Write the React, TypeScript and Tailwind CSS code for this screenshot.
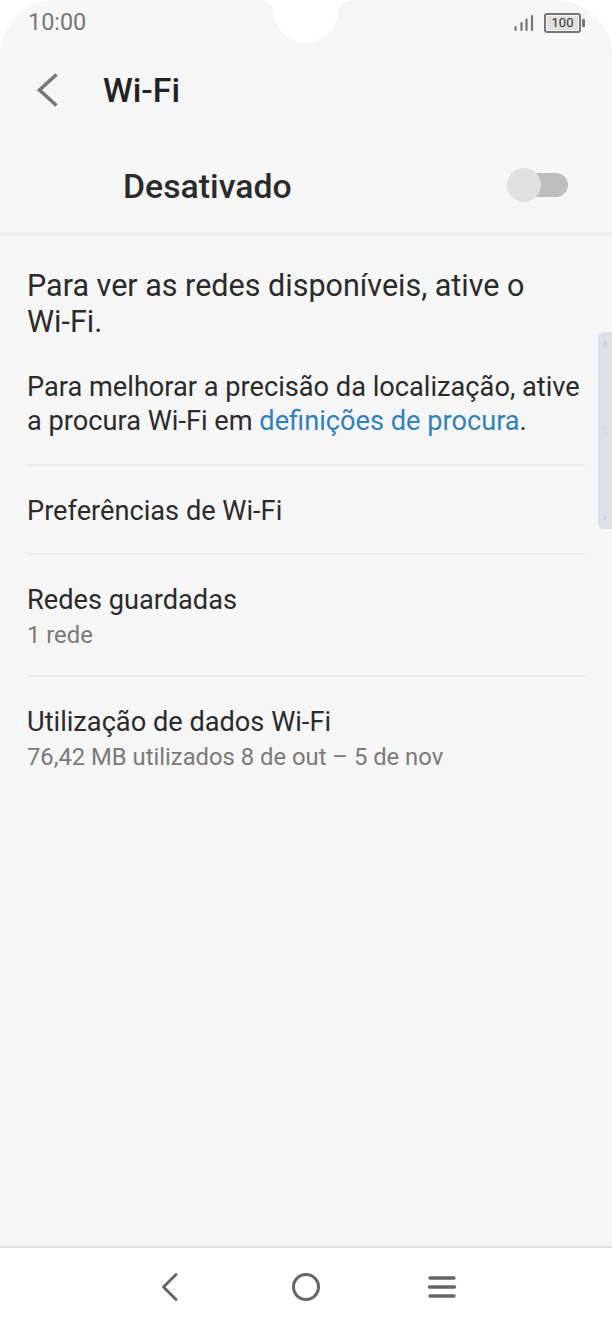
function Row({ title, sub }: { title: string; sub?: string }) {
  return (
    <div className="border-t-2 border-[#ebebeb] pt-[28px]">
      <p className="text-[27.2px] leading-[35px] text-[#2b2b2b]">{title}</p>
      {sub && <p className="text-[23.8px] leading-[32px] mt-[1px] text-[#7a7a7a]">{sub}</p>}
    </div>
  );
}

export default function App() {
  return (
    <div className="w-[612px] h-[1328px] bg-white flex flex-col overflow-hidden font-['Roboto',sans-serif] relative">
      <div className="flex-1 bg-[#f6f6f6] rounded-t-[56px] relative flex flex-col">
        {/* notch */}
        <svg className="absolute left-[225px] top-0" width="140" height="44" viewBox="0 0 140 44">
          <path d="M30 0 C 42 0 47 3 49 12 C 50 30 64 42 81 42 C 98 42 112 30 113 12 C 115 3 120 0 132 0 Z" fill="#fff" />
        </svg>

        {/* status bar */}
        <div className="h-[44px] flex items-center justify-between pl-[28px] pr-[27px] pt-[1px]">
          <span className="text-[23.4px] text-[#777777] pt-[1px]">10:00</span>
          <div className="flex items-center gap-[10px]">
            <svg width="20" height="18" viewBox="0 0 20 18">
              <g stroke="#777" strokeWidth="2.2" strokeLinecap="round">
                <path d="M1.5 16v-3" />
                <path d="M7.5 16V9" />
                <path d="M12.5 16V5.5" />
                <path d="M18 16V2" />
              </g>
            </svg>
            <div className="flex items-center">
              <div className="w-[37px] h-[20px] border-2 border-[#777] rounded-[3px] p-[1px]">
                <div className="h-full bg-[#e0e0e0] rounded-[1px] flex items-center justify-center text-[13px] leading-none text-[#333]">
                  100
                </div>
              </div>
              <div className="w-[3px] h-[8px] bg-[#777] ml-[1px]" />
            </div>
          </div>
        </div>

        {/* title bar */}
        <div className="h-[92px] flex items-center">
          <svg className="ml-[32px]" width="32" height="40" viewBox="0 0 32 40" fill="none" stroke="#777" strokeWidth="3.6">
            <path d="M24.5 4.5 L7.5 20 L24.5 35.5" />
          </svg>
          <h1 className="ml-[39px] pt-[2px] text-[33.8px] font-medium text-[#222222]">Wi-Fi</h1>
        </div>

        {/* master switch */}
        <div className="h-[100px] pt-[2px] flex items-center justify-between pl-[123px] pr-[44px] border-b-[4px] border-[#eeeeee]">
          <span className="pt-[4px] text-[33.8px] font-medium text-[#2b2b2b]">Desativado</span>
          <div className="relative w-[60px] h-[24px] bg-[#bdbdbd] rounded-full">
            <div className="absolute left-[-1px] top-[-5px] w-[34px] h-[34px] rounded-full bg-[#e0e0e0]" />
          </div>
        </div>

        {/* content */}
        <div className="px-[27px] pt-[32px] flex flex-col">
          <p className="text-[30.5px] leading-[36px] text-[#2b2b2b]">
            Para ver as redes disponíveis, ative o
            <br />
            Wi-Fi.
          </p>
          <p className="mt-[30px] text-[27.2px] leading-[34px] text-[#2b2b2b]">
            Para melhorar a precisão da localização, ative
            <br />
            a procura Wi-Fi em <span className="text-[#3281b8]">definições de procura</span>.
          </p>
          <div className="mt-[26px]">
            <div className="h-[89px]">
              <Row title="Preferências de Wi-Fi" />
            </div>
            <div className="h-[122px]">
              <Row title="Redes guardadas" sub="1 rede" />
            </div>
            <Row title="Utilização de dados Wi-Fi" sub="76,42 MB utilizados 8 de out – 5 de nov" />
          </div>
        </div>

        {/* scroll handle */}
        <div className="absolute right-0 top-[332px] w-[14px] h-[197px] bg-[#dde0e7] rounded-l-[6px] flex flex-col items-center justify-between py-[8px]">
          <svg width="6" height="5" viewBox="0 0 6 5"><path d="M3 0 L6 5 H0 Z" fill="#cdd1d9" /></svg>
          <svg width="6" height="7" viewBox="0 0 6 7"><path d="M0 1h6M0 3.5h6M0 6h6" stroke="#cdd1d9" strokeWidth="1" /></svg>
          <svg width="6" height="5" viewBox="0 0 6 5"><path d="M3 5 L6 0 H0 Z" fill="#cdd1d9" /></svg>
        </div>
      </div>

      {/* nav bar */}
      <div className="h-[82px] bg-white border-t-2 border-[#dcdcdc] flex items-start justify-center pt-[21px] gap-[100px]">
        <svg width="36" height="36" viewBox="0 0 36 36" fill="none" stroke="#666" strokeWidth="3" strokeLinecap="round" strokeLinejoin="round">
          <path d="M24 5.5 L11.5 18 L24 30.5" />
        </svg>
        <svg width="36" height="36" viewBox="0 0 36 36" fill="none" stroke="#666" strokeWidth="3">
          <circle cx="18" cy="18" r="12.5" />
        </svg>
        <svg width="36" height="36" viewBox="0 0 36 36" fill="none" stroke="#666" strokeWidth="3.4" strokeLinecap="round">
          <path d="M6 9h24M5.5 18h25M6 27h24" />
        </svg>
      </div>
    </div>
  );
}
